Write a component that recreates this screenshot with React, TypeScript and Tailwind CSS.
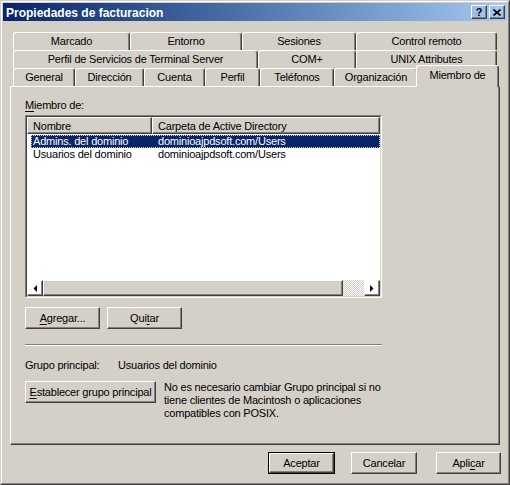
import type { ReactNode } from 'react'

const raised =
  'border border-t-white border-l-white border-r-[#404040] border-b-[#404040] shadow-[inset_-1px_-1px_0_#808080]'

const tabBase =
  'h-[18px] shrink-0 flex items-center justify-center border-l border-t border-r border-l-white border-t-white border-r-[#404040] rounded-t-[3px] shadow-[inset_-1px_0_0_#808080] bg-[#d4d0c8]'

function Btn({ children, w, def }: { children: ReactNode; w: string; def?: boolean }) {
  if (def)
    return (
      <div className={`${w} h-[22px] border border-black`}>
        <div className={`h-full flex items-center justify-center ${raised}`}>{children}</div>
      </div>
    )
  return <div className={`${w} h-[22px] flex items-center justify-center ${raised}`}>{children}</div>
}

function U({ children }: { children: ReactNode }) {
  return <span className="underline underline-offset-[2px]">{children}</span>
}

function Arrow({ dir }: { dir: 'left' | 'right' }) {
  return (
    <div className={`w-[16px] h-[16px] shrink-0 flex items-center justify-center ${raised}`}>
      <svg width="4" height="7" viewBox="0 0 4 7">
        {dir === 'left' ? <polygon points="4,0 4,7 0.5,3.5" fill="#000" /> : <polygon points="0,0 0,7 3.5,3.5" fill="#000" />}
      </svg>
    </div>
  )
}

const row1: [string, string][] = [
  ['Marcado', 'w-[117px]'],
  ['Entorno', 'w-[112px]'],
  ['Sesiones', 'w-[114px]'],
  ['Control remoto', 'w-[141px]'],
]
const row2: [string, string][] = [
  ['Perfil de Servicios de Terminal Server', 'w-[245px]'],
  ['COM+', 'w-[98px]'],
  ['UNIX Attributes', 'w-[141px]'],
]
const row3: [string, string][] = [
  ['General', 'w-[62px]'],
  ['Dirección', 'w-[69px]'],
  ['Cuenta', 'w-[61px]'],
  ['Perfil', 'w-[55px]'],
  ['Teléfonos', 'w-[74px]'],
  ['Organización', 'w-[84px]'],
]

export default function App() {
  return (
    <div className="w-[510px] h-[485px] bg-[#d4d0c8] border border-t-[#d4d0c8] border-l-[#d4d0c8] border-r-[#404040] border-b-[#404040] font-['Liberation_Sans',Arial,sans-serif] text-[11px] tracking-[-0.2px] text-black select-none">
      <div className="h-full border border-t-white border-l-white border-r-[#808080] border-b-[#808080] p-px flex flex-col">
        {/* Title bar */}
        <div className="h-[18px] shrink-0 bg-linear-to-r from-[#0a246a] to-[#a6caf0] flex items-center justify-between pl-[3px] pr-[2px]">
          <span className="text-white font-bold text-[12px] tracking-normal leading-none pt-px">Propiedades de facturacion</span>
          <div className="flex gap-[2px]">
            <div className={`w-[16px] h-[14px] flex items-center justify-center font-bold text-[11px] leading-none ${raised}`}>?</div>
            <div className={`w-[16px] h-[14px] flex items-center justify-center ${raised}`}>
              <svg width="8" height="7" viewBox="0 0 8 7">
                <path d="M0.5 0.5 L7.5 6.5 M7.5 0.5 L0.5 6.5" stroke="#000" strokeWidth="1.6" />
              </svg>
            </div>
          </div>
        </div>

        {/* Tabs */}
        <div className="mt-[11px] ml-[7px] w-[490px] flex flex-col">
          <div className="pl-[3px] flex h-[18px]">
            {row1.map(([t, w]) => (
              <div key={t} className={`${tabBase} ${w}`}>{t}</div>
            ))}
          </div>
          <div className="pl-[3px] flex h-[18px]">
            {row2.map(([t, w]) => (
              <div key={t} className={`${tabBase} ${w}`}>{t}</div>
            ))}
          </div>
          <div className="pl-[3px] flex items-end h-[18px]">
            {row3.map(([t, w]) => (
              <div key={t} className={`${tabBase} ${w}`}>{t}</div>
            ))}
            <div className="relative z-10 w-[83px] h-[22px] -ml-[2px] -mb-px shrink-0 flex items-center justify-center pb-[3px] border-l border-t border-r border-l-white border-t-white border-r-[#404040] rounded-t-[3px] shadow-[inset_-1px_0_0_#808080] bg-[#d4d0c8]">
              Miembro de
            </div>
          </div>

          {/* Panel */}
          <div className={`h-[359px] pl-[14px] pt-[12px] flex flex-col ${raised}`}>
            <div className="h-[13px] leading-[13px]">
              <U>M</U>iembro de:
            </div>

            <div className="mt-[3px] w-[357px] h-[183px] border border-t-[#808080] border-l-[#808080] border-r-white border-b-white">
              <div className="h-full border border-t-[#404040] border-l-[#404040] border-r-[#d4d0c8] border-b-[#d4d0c8] bg-white flex flex-col">
                <div className="h-[17px] shrink-0 flex bg-[#d4d0c8]">
                  <div className={`w-[125px] pl-[5px] pt-px flex items-center ${raised}`}>Nombre</div>
                  <div className={`flex-1 pl-[5px] pt-px flex items-center ${raised}`}>Carpeta de Active Directory</div>
                </div>
                <div className="flex-1 pt-px pl-[4px]">
                  <div className="h-[13px] leading-[13px] flex bg-[#0a246a] text-white outline-1 outline-dotted -outline-offset-1 outline-[#d4d0c8]">
                    <div className="w-[121px] pl-[2px]">Admins. del dominio</div>
                    <div className="pl-[6px]">dominioajpdsoft.com/Users</div>
                  </div>
                  <div className="h-[13px] leading-[13px] flex">
                    <div className="w-[121px] pl-[2px]">Usuarios del dominio</div>
                    <div className="pl-[6px]">dominioajpdsoft.com/Users</div>
                  </div>
                </div>
                <div className="h-[16px] shrink-0 flex">
                  <Arrow dir="left" />
                  <div className={`w-[300px] h-[16px] shrink-0 ${raised} bg-[#d4d0c8]`} />
                  <div className="flex-1 bg-[repeating-conic-gradient(#ffffff_0%_25%,#d4d0c8_0%_50%)] bg-[length:2px_2px]" />
                  <Arrow dir="right" />
                </div>
              </div>
            </div>

            <div className="mt-[9px] flex gap-[7px]">
              <Btn w="w-[75px]">
                <U>A</U>gregar...
              </Btn>
              <Btn w="w-[75px]">
                Qui<U>t</U>ar
              </Btn>
            </div>

            <div className="mt-[15px] w-[357px] h-[2px] border-t border-b border-t-[#808080] border-b-white" />

            <div className="mt-[13px] h-[13px] leading-[13px] flex">
              <span className="w-[93px]">Grupo principal:</span>
              <span>Usuarios del dominio</span>
            </div>

            <div className="mt-[9px] flex items-start">
              <Btn w="w-[131px]">
                <span>
                  <U>E</U>stablecer grupo principal
                </span>
              </Btn>
              <div className="ml-[8px] leading-[13px]">
                No es necesario cambiar Grupo principal si no
                <br />
                tiene clientes de Macintosh o aplicaciones
                <br />
                compatibles con POSIX.
              </div>
            </div>
          </div>
        </div>

        {/* Dialog buttons */}
        <div className="mt-[7px] flex justify-end pr-[6px]">
          <Btn w="w-[67px]" def>
            Aceptar
          </Btn>
          <div className="ml-[16px]">
            <Btn w="w-[66px]">Cancelar</Btn>
          </div>
          <div className="ml-[19px]">
            <Btn w="w-[65px]">
              Apli<U>c</U>ar
            </Btn>
          </div>
        </div>
      </div>
    </div>
  )
}
